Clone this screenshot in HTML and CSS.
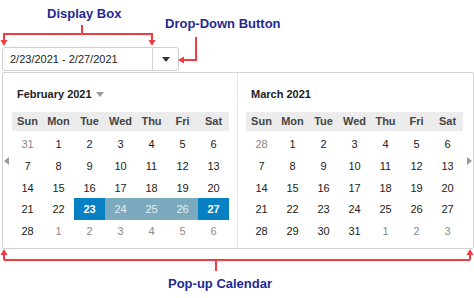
FILE: index.html
```html
<!DOCTYPE html>
<html>
<head>
<meta charset="utf-8">
<link rel="stylesheet" href="styles.css">
</head>
<body>
<div class="page">
  <div class="picker">
    <div class="picker-value">2/23/2021 - 2/27/2021</div>
    <div class="picker-btn"><span class="tri"></span></div>
  </div>
  <div class="popup">
    <span class="nav nav-prev"></span>
    <span class="nav nav-next"></span>
    <div class="month month-first">
      <div class="month-title">February 2021 <span class="title-tri"></span></div>
      <div class="grid">
        <div class="dow">Sun</div><div class="dow">Mon</div><div class="dow">Tue</div><div class="dow">Wed</div><div class="dow">Thu</div><div class="dow">Fri</div><div class="dow">Sat</div>
        <div class="day other">31</div><div class="day">1</div><div class="day">2</div><div class="day">3</div><div class="day">4</div><div class="day">5</div><div class="day">6</div>
        <div class="day">7</div><div class="day">8</div><div class="day">9</div><div class="day">10</div><div class="day">11</div><div class="day">12</div><div class="day">13</div>
        <div class="day">14</div><div class="day">15</div><div class="day">16</div><div class="day">17</div><div class="day">18</div><div class="day">19</div><div class="day">20</div>
        <div class="day">21</div><div class="day">22</div><div class="day sel">23</div><div class="day range">24</div><div class="day range">25</div><div class="day range">26</div><div class="day sel">27</div>
        <div class="day">28</div><div class="day other">1</div><div class="day other">2</div><div class="day other">3</div><div class="day other">4</div><div class="day other">5</div><div class="day other">6</div>
      </div>
    </div>
    <div class="month month-second">
      <div class="month-title">March 2021</div>
      <div class="grid">
        <div class="dow">Sun</div><div class="dow">Mon</div><div class="dow">Tue</div><div class="dow">Wed</div><div class="dow">Thu</div><div class="dow">Fri</div><div class="dow">Sat</div>
        <div class="day other">28</div><div class="day">1</div><div class="day">2</div><div class="day">3</div><div class="day">4</div><div class="day">5</div><div class="day">6</div>
        <div class="day">7</div><div class="day">8</div><div class="day">9</div><div class="day">10</div><div class="day">11</div><div class="day">12</div><div class="day">13</div>
        <div class="day">14</div><div class="day">15</div><div class="day">16</div><div class="day">17</div><div class="day">18</div><div class="day">19</div><div class="day">20</div>
        <div class="day">21</div><div class="day">22</div><div class="day">23</div><div class="day">24</div><div class="day">25</div><div class="day">26</div><div class="day">27</div>
        <div class="day">28</div><div class="day">29</div><div class="day">30</div><div class="day">31</div><div class="day other">1</div><div class="day other">2</div><div class="day other">3</div>
      </div>
    </div>
  </div>

  <svg class="callouts" width="474" height="298" viewBox="0 0 474 298">
    <g stroke="#ef3b41" stroke-width="2" fill="none">
      <path d="M82 25 V34 M3 34 H153 M4 34 V41 M152 34 V41"/>
      <path d="M196 37 V60 H183"/>
      <path d="M4 260 H470 M4 260 V254 M470 260 V254 M216 260 V271"/>
    </g>
    <g fill="#ef3b41">
      <path d="M0.5 40 H7.5 L4 46 Z"/>
      <path d="M148.5 40 H155.5 L152 46 Z"/>
      <path d="M184 56.5 V63.5 L178 60 Z"/>
      <path d="M0.5 255 H7.5 L4 249 Z"/>
      <path d="M466.5 255 H473.5 L470 249 Z"/>
    </g>
  </svg>
  <div class="label label-display">Display Box</div>
  <div class="label label-button">Drop-Down Button</div>
  <div class="label label-popup">Pop-up Calendar</div>
</div>
</body>
</html>
```

FILE: styles.css
```css
html, body {
  margin: 0;
  padding: 0;
  background: #ffffff;
}
body {
  width: 474px;
  height: 298px;
  overflow: hidden;
  font-family: "Liberation Sans", Arial, sans-serif;
  color: #222;
}
.page {
  position: relative;
  width: 474px;
  height: 298px;
  padding: 47px 0 0 2px;
  box-sizing: border-box;
}
.picker {
  display: flex;
  width: 177px;
  height: 24px;
  box-sizing: border-box;
  border: 1px solid #cfcfcf;
  border-radius: 3px;
  background: #fff;
}
.picker-value {
  flex: 1;
  padding-left: 7px;
  font-size: 11px;
  line-height: 22px;
  color: #222;
}
.picker-btn {
  width: 25px;
  border-left: 1px solid #d4d4d4;
  display: flex;
  align-items: center;
  justify-content: center;
}
.tri {
  width: 0;
  height: 0;
  border-left: 4px solid transparent;
  border-right: 4px solid transparent;
  border-top: 5px solid #333;
  margin-top: 1px;
}
.popup {
  position: relative;
  display: flex;
  margin-top: 1px;
  width: 472px;
  height: 177px;
  box-sizing: border-box;
  border: 1px solid #d2d2d2;
  border-radius: 2px;
  background: #fff;
}
.month {
  padding-top: 14px;
}
.month-first {
  width: 235px;
  padding-left: 9px;
  box-sizing: border-box;
  border-right: 1px solid #e6e6e6;
}
.month-second {
  padding-left: 8px;
}
.month-title {
  display: flex;
  align-items: center;
  gap: 4px;
  height: 14px;
  padding-left: 5px;
  margin-bottom: 11px;
  font-size: 11px;
  font-weight: bold;
  color: #222;
}
.title-tri {
  width: 0;
  height: 0;
  border-left: 4px solid transparent;
  border-right: 4px solid transparent;
  border-top: 5px solid #999;
  margin-top: 1px;
}
.grid {
  display: grid;
  grid-template-columns: repeat(7, 31px);
  grid-auto-rows: 21.6px;
  width: 217px;
}
.dow {
  height: 19px;
  line-height: 19px;
  background: #ececec;
  text-align: center;
  font-size: 11px;
  font-weight: bold;
  color: #444;
}
.day {
  display: flex;
  align-items: center;
  justify-content: center;
  font-size: 11px;
  color: #222;
}
.day.other {
  color: #8a8a8a;
}
.day.sel {
  background: #0781c3;
  color: #fff;
  font-weight: bold;
}
.day.range {
  background: #7ba9be;
  color: #e8eff3;
}
.nav {
  position: absolute;
  top: 84px;
  width: 0;
  height: 0;
  border-top: 4px solid transparent;
  border-bottom: 4px solid transparent;
}
.nav-prev {
  left: 1px;
  border-right: 5px solid #9a9a9a;
}
.nav-next {
  right: 1px;
  border-left: 5px solid #9a9a9a;
}
.callouts {
  position: absolute;
  left: 0;
  top: 0;
  pointer-events: none;
}
.label {
  position: absolute;
  font-size: 13px;
  font-weight: bold;
  line-height: 15px;
  color: #1f2a93;
  white-space: nowrap;
}
.label-display {
  left: 47px;
  top: 6px;
}
.label-button {
  left: 165px;
  top: 16px;
}
.label-popup {
  left: 168px;
  top: 276px;
}
```
